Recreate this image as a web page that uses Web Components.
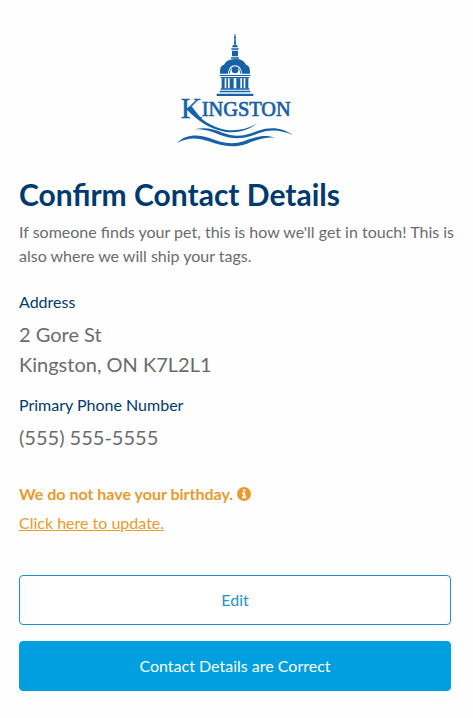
<!DOCTYPE html>
<html lang="en">
<head>
<meta charset="utf-8">
<meta name="viewport" content="width=device-width, initial-scale=1">
<title>Confirm Contact Details</title>
<style>
  body {
    margin: 0;
    background: #fefefe;
    color: #6b6b6b;
    font: 16px/24px Lato, "Liberation Sans", sans-serif;
    --navy: #003a70;
    --blue: #009fdf;
    --orange: #eb9a2d;
  }
</style>
</head>
<body>
<contact-page>
  <city-logo slot="logo"></city-logo>
  <page-intro heading="Confirm Contact Details">If someone finds your pet, this is how we'll get in touch! This is also where we will ship your tags.</page-intro>
  <contact-details>
    <contact-field label="Address">2 Gore St<br>Kingston, ON K7L2L1</contact-field>
    <contact-field label="Primary Phone Number">(555) 555-5555</contact-field>
  </contact-details>
  <missing-notice link="Click here to update.">We do not have your birthday.</missing-notice>
  <button-stack>
    <action-button>Edit</action-button>
    <action-button primary>Contact Details are Correct</action-button>
  </button-stack>
</contact-page>

<script>
class BaseElement extends HTMLElement {
  constructor() {
    super();
    this.attachShadow({ mode: "open" });
  }

  connectedCallback() {
    this.shadowRoot.innerHTML = this.template();
  }
}

class ContactPage extends BaseElement {
  template() {
    return `
    <style>
      :host { display: block; }
      main { padding: 0 22px 24px 19px; }
      header { display: flex; justify-content: center; padding: 25px 0 21px; }
    </style>
    <main>
      <header><slot name="logo"></slot></header>
      <slot></slot>
    </main>`;
  }
}

class CityLogo extends BaseElement {
  template() {
    return `
    <style>
      :host { display: block; }
      svg { display: block; width: 130px; height: 130px; }
      text { font-family: "Liberation Serif", serif; }
    </style>
    <svg viewBox="0 0 390 390" role="img" aria-label="Kingston" fill="#1761a8">
      <!-- spire and lantern -->
      <path d="M194 26h2l2 32h-6z"/>
      <circle cx="195" cy="37" r="3"/>
      <path d="M186 67q1-8 9-9q8 1 9 9z"/>
      <path d="M184 70h22v4h-22zM186 77h18v17h-18zM183 97h24v4h-24z"/>
      <!-- dome -->
      <path d="M150 146c0-15 1-24 12-27q8-16 33-17t33 17c11 3 12 12 12 27h-24c-1-15-9-25-21-25s-20 10-21 25z"/>
      <path d="M178 146c0-27 34-27 34 0" fill="none" stroke="#1761a8" stroke-width="3"/>
      <circle cx="195" cy="135" r="10"/>
      <path d="M149 150h92v3h-92zM152 156h86v4h-86z"/>
      <!-- columns -->
      <path d="M155 160h9v31h-9zM169 160h5v31h-5zM179 160h12v31h-12zM199 160h12v31h-12zM216 160h5v31h-5zM226 160h9v31h-9z"/>
      <path d="M152 190h86v4h-86zM149 197h92v5h-92zM140 206h110v7H140z"/>
      <text x="32" y="280" font-size="88" stroke="#1761a8" stroke-width="1">K<tspan y="273" font-size="61" stroke-width="2">INGSTON</tspan></text>
      <!-- tail of the K and the waves -->
      <path d="M58 245C91 281 123 307 166 314q50 8 96-19q-43 34-98 25C117 312 79 285 50 253z"/>
      <path d="M74 313c30-7 55-2 84 10c43 17 71 7 106-6c40-14 76-8 105 13c-36-15-67-18-101-6c-39 15-71 23-115 7c-29-12-49-19-79-18z"/>
      <path d="M21 354c24-25 61-28 97-15c36 14 66 22 105 9c38-14 62-20 93-10c-27-3-50 4-85 18c-42 14-75 8-115-7c-35-13-64-12-95 5z"/>
    </svg>`;
  }
}

class PageIntro extends BaseElement {
  template() {
    return `
    <style>
      :host { display: block; margin-bottom: 22px; }
      h1 { margin: 0 0 8px; color: var(--navy); font-size: 30px; line-height: 36px; font-weight: 700; }
      /* the text may run a little into the page's right gutter */
      p { margin: 0 -12px 0 0; }
    </style>
    <h1>${this.getAttribute("heading")}</h1>
    <p><slot></slot></p>`;
  }
}

class ContactDetails extends BaseElement {
  template() {
    return `
    <style>
      :host { display: block; margin-bottom: 30px; }
      dl { display: flex; flex-direction: column; gap: 14px; margin: 0; }
    </style>
    <dl><slot></slot></dl>`;
  }
}

class ContactField extends BaseElement {
  template() {
    return `
    <style>
      :host { display: block; }
      dt { margin-bottom: 5px; color: var(--navy); }
      dd { margin: 0; font-size: 20px; line-height: 30px; }
    </style>
    <dt>${this.getAttribute("label")}</dt>
    <dd><slot></slot></dd>`;
  }
}

class MissingNotice extends BaseElement {
  template() {
    return `
    <style>
      :host { display: block; margin-bottom: 40px; color: var(--orange); }
      p { display: flex; align-items: center; gap: 4px; margin: 0 0 5px; font-weight: 700; }
      svg { width: 14px; height: 14px; }
      a { color: inherit; }
    </style>
    <p>
      <slot></slot>
      <svg viewBox="0 0 14 14" aria-hidden="true">
        <circle cx="7" cy="7" r="7" fill="currentColor"/>
        <path d="M6 2.5h2.3v2H6zM5 5.6h3.3v4h1v1.6H5V9.6h1V7.2H5z" fill="#fff"/>
      </svg>
    </p>
    <a href="#">${this.getAttribute("link")}</a>`;
  }
}

class ButtonStack extends BaseElement {
  template() {
    return `
    <style>
      :host { display: flex; flex-direction: column; gap: 16px; }
    </style>
    <slot></slot>`;
  }
}

class ActionButton extends BaseElement {
  template() {
    return `
    <style>
      :host { display: block; }
      button {
        display: block;
        width: 100%;
        padding: 12px 16px;
        border: 1px solid #1c8fc7;
        border-radius: 4px;
        background: #fff;
        color: #1c94d2;
        font: inherit;
        cursor: pointer;
      }
      :host([primary]) button { border-color: var(--blue); background: var(--blue); color: #fff; }
    </style>
    <button type="button"><slot></slot></button>`;
  }
}

customElements.define("contact-page", ContactPage);
customElements.define("city-logo", CityLogo);
customElements.define("page-intro", PageIntro);
customElements.define("contact-details", ContactDetails);
customElements.define("contact-field", ContactField);
customElements.define("missing-notice", MissingNotice);
customElements.define("button-stack", ButtonStack);
customElements.define("action-button", ActionButton);
</script>
</body>
</html>
